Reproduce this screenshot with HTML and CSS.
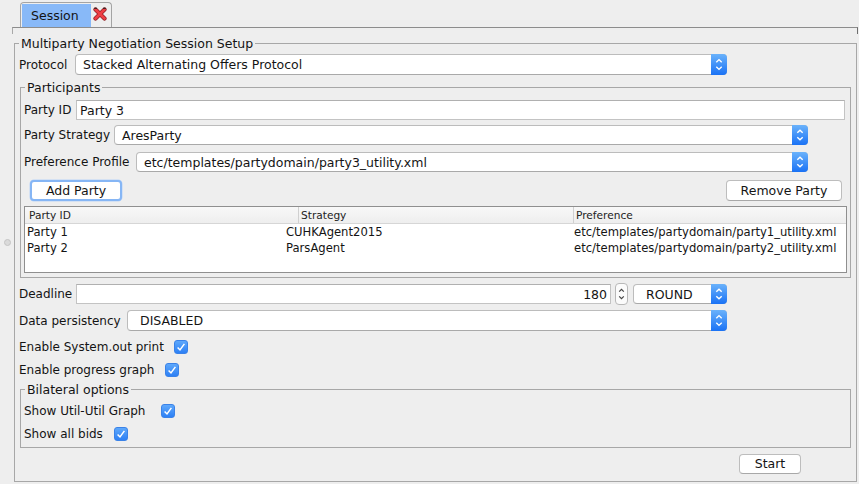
FILE: index.html
```html
<!DOCTYPE html>
<html>
<head>
<meta charset="utf-8">
<title>Session</title>
<link rel="stylesheet" href="styles.css">
</head>
<body>
<div class="tabstrip">
  <div class="tab">
    <span class="tab-label">Session</span>
    <svg class="tab-close" width="14" height="14" viewBox="0 0 14 14">
      <path d="M2.5 2.5 L11.5 11.5 M11.5 2.5 L2.5 11.5" stroke="#8e1a1f" stroke-width="4.2" stroke-linecap="round" fill="none"/>
      <path d="M2.5 2.5 L11.5 11.5 M11.5 2.5 L2.5 11.5" stroke="#ef3f45" stroke-width="2.8" stroke-linecap="round" fill="none"/>
      <path d="M1.2 1.3 L4 1.3 M10 1.3 L12.8 1.3" stroke="#222" stroke-width="1" fill="none"/>
    </svg>
  </div>
</div>
<div class="pane-edge"></div>
<span class="split-dot"></span>

<fieldset class="group setup">
  <legend>Multiparty Negotiation Session Setup</legend>

  <div class="row protocol-row">
    <span class="lbl">Protocol</span>
    <div class="combo">
      <span class="combo-text">Stacked Alternating Offers Protocol</span>
      <span class="combo-btn"><svg width="16" height="21" viewBox="0 0 16 21"><path d="M5.3 8.2 L8 5.6 L10.7 8.2 M5.3 12.8 L8 15.4 L10.7 12.8" stroke="#fff" stroke-width="1.4" fill="none"/></svg></span>
    </div>
  </div>

  <fieldset class="group participants">
    <legend>Participants</legend>
    <div class="row id-row">
      <span class="lbl">Party ID</span>
      <div class="field">Party 3</div>
    </div>
    <div class="row strat-row">
      <span class="lbl">Party Strategy</span>
      <div class="combo">
        <span class="combo-text">AresParty</span>
        <span class="combo-btn"><svg width="16" height="20" viewBox="0 0 16 20"><path d="M5.3 7.8 L8 5.2 L10.7 7.8 M5.3 12.2 L8 14.8 L10.7 12.2" stroke="#fff" stroke-width="1.4" fill="none"/></svg></span>
      </div>
    </div>
    <div class="row pref-row">
      <span class="lbl">Preference Profile</span>
      <div class="combo">
        <span class="combo-text">etc/templates/partydomain/party3_utility.xml</span>
        <span class="combo-btn"><svg width="16" height="20" viewBox="0 0 16 20"><path d="M5.3 7.8 L8 5.2 L10.7 7.8 M5.3 12.2 L8 14.8 L10.7 12.2" stroke="#fff" stroke-width="1.4" fill="none"/></svg></span>
      </div>
    </div>
    <div class="btn-row">
      <button class="btn btn-add">Add Party</button>
      <button class="btn btn-remove">Remove Party</button>
    </div>
    <div class="table">
      <div class="thead">
        <span>Party ID</span><span>Strategy</span><span>Preference</span>
      </div>
      <div class="trow">
        <span>Party 1</span><span>CUHKAgent2015</span><span>etc/templates/partydomain/party1_utility.xml</span>
      </div>
      <div class="trow">
        <span>Party 2</span><span>ParsAgent</span><span>etc/templates/partydomain/party2_utility.xml</span>
      </div>
    </div>
  </fieldset>

  <div class="row deadline-row">
    <span class="lbl">Deadline</span>
    <div class="field field-num">180</div>
    <span class="spinner"><svg width="11" height="20" viewBox="0 0 11 20"><path d="M3.2 7.6 L5.5 5.3 L7.8 7.6 M3.2 12.4 L5.5 14.7 L7.8 12.4" stroke="#444" stroke-width="1.2" fill="none"/></svg></span>
    <div class="combo combo-round">
      <span class="combo-text enum">ROUND</span>
      <span class="combo-btn"><svg width="16" height="20" viewBox="0 0 16 20"><path d="M5.3 7.8 L8 5.2 L10.7 7.8 M5.3 12.2 L8 14.8 L10.7 12.2" stroke="#fff" stroke-width="1.4" fill="none"/></svg></span>
    </div>
  </div>

  <div class="row persist-row">
    <span class="lbl">Data persistency</span>
    <div class="combo">
      <span class="combo-text enum">DISABLED</span>
      <span class="combo-btn"><svg width="16" height="21" viewBox="0 0 16 21"><path d="M5.3 8.2 L8 5.6 L10.7 8.2 M5.3 12.8 L8 15.4 L10.7 12.8" stroke="#fff" stroke-width="1.4" fill="none"/></svg></span>
    </div>
  </div>

  <div class="check-row check-sysout">
    <span class="lbl">Enable System.out print</span>
    <span class="cb"><svg width="14" height="14" viewBox="0 0 14 14"><path d="M3.6 7.4 L6 9.9 L10.4 3.9" stroke="#fff" stroke-width="1.5" fill="none"/></svg></span>
  </div>
  <div class="check-row check-progress">
    <span class="lbl">Enable progress graph</span>
    <span class="cb"><svg width="14" height="14" viewBox="0 0 14 14"><path d="M3.6 7.4 L6 9.9 L10.4 3.9" stroke="#fff" stroke-width="1.5" fill="none"/></svg></span>
  </div>

  <fieldset class="group bilateral">
    <legend>Bilateral options</legend>
    <div class="check-row check-util">
      <span class="lbl">Show Util-Util Graph</span>
      <span class="cb"><svg width="14" height="14" viewBox="0 0 14 14"><path d="M3.6 7.4 L6 9.9 L10.4 3.9" stroke="#fff" stroke-width="1.5" fill="none"/></svg></span>
    </div>
    <div class="check-row check-bids">
      <span class="lbl">Show all bids</span>
      <span class="cb"><svg width="14" height="14" viewBox="0 0 14 14"><path d="M3.6 7.4 L6 9.9 L10.4 3.9" stroke="#fff" stroke-width="1.5" fill="none"/></svg></span>
    </div>
  </fieldset>

  <div class="start-row">
    <button class="btn btn-start">Start</button>
  </div>
</fieldset>
</body>
</html>
```

FILE: styles.css
```css
* { box-sizing: border-box; }
html, body { margin: 0; padding: 0; }
body {
  background: #eeeeee;
  font-family: "DejaVu Sans", "Liberation Sans", sans-serif;
  font-size: 12.5px;
  color: #141414;
  width: 859px;
  height: 484px;
  overflow: hidden;
  position: relative;
}

/* tab strip */
.tabstrip {
  height: 27px;
  padding: 2px 0 0 20px;
  display: flex;
}
.tab {
  width: 92px;
  height: 25px;
  border: 1px solid #a4a4a4;
  border-bottom: none;
  border-radius: 4px 4px 0 0;
  padding: 1px 0 0 1px;
  display: flex;
  align-items: stretch;
}
.tab-label {
  width: 69px;
  background: #88b9f8;
  display: flex;
  align-items: center;
  padding-left: 9px;
  padding-bottom: 1px;
}
.tab-close {
  align-self: center;
  margin: -3px 0 0 2px;
}
.pane-edge {
  margin: 0 1px 0 12px;
  height: 7px;
  border-top: 1px solid #8c8c8c;
  border-left: 1px solid #a8a8a8;
  border-right: 1px solid #6e6e6e;
}
.split-dot {
  position: absolute;
  left: 4px;
  top: 239px;
  width: 7px;
  height: 7px;
  border-radius: 50%;
  background: #dadada;
  border: 1px solid #c4c4c4;
}

/* titled groups */
fieldset.group {
  border: 1px solid #a7a7a7;
  padding: 0;
  margin: 0;
  min-width: 0;
}
fieldset.group > legend {
  padding: 0 2px;
  margin-left: 4px;
  height: 15px;
  line-height: 15px;
  white-space: nowrap;
}
.setup {
  margin: 2px 2px 0 14px !important;
  padding: 0 0 6px 0 !important;
}
.participants {
  margin: 5px 5px 0 5px !important;
  padding: 0 0 4px 0 !important;
}
.bilateral {
  margin: 5px 5px 0 5px !important;
  padding: 0 0 6px 0 !important;
}

/* rows */
.row {
  display: flex;
  align-items: center;
  white-space: nowrap;
}
.lbl { white-space: nowrap; flex: none; font-size: 12px; }
.protocol-row { margin: 3px 129px 0 4px; height: 21px; }
.protocol-row .lbl { width: 56px; }
.id-row { margin: 5px 5px 0 3px; height: 20px; }
.id-row .lbl { width: 52px; }
.strat-row { margin: 5px 42px 0 3px; height: 20px; }
.strat-row .lbl { width: 90px; }
.pref-row { margin: 7px 42px 0 3px; height: 20px; }
.pref-row .lbl { width: 112px; }
.deadline-row { margin: 6px 129px 0 4px; height: 20px; }
.deadline-row .lbl { width: 57px; }
.persist-row { margin: 6px 129px 0 4px; height: 21px; }
.persist-row .lbl { width: 108px; }

/* combo box */
.combo {
  flex: 1;
  align-self: stretch;
  background: #fff;
  border: 1px solid #bcbcbc;
  border-bottom-color: #a9a9a9;
  border-radius: 4px;
  display: flex;
  align-items: center;
  min-width: 0;
}
.combo-text {
  flex: 1;
  padding-left: 7px;
  white-space: nowrap;
  overflow: hidden;
}
.combo-text.enum { padding-left: 12px; }
.combo-btn {
  width: 16px;
  align-self: stretch;
  margin: -1px -1px -1px 0;
  background: linear-gradient(#6ab2fb, #1a72f5);
  border-radius: 0 4px 4px 0;
  display: flex;
  align-items: center;
  justify-content: center;
}
.combo-btn svg { display: block; }
.combo-round {
  flex: 0 0 94px;
  margin-left: 5px;
}

/* text field */
.field {
  flex: 1;
  align-self: stretch;
  background: #fff;
  border: 1px solid #c3c3c3;
  border-top-color: #b0b0b0;
  padding-left: 3px;
  display: flex;
  align-items: center;
  white-space: nowrap;
}
.field-num {
  justify-content: flex-end;
  padding: 0 3px 0 0;
}
.spinner {
  flex: 0 0 13px;
  height: 22px;
  margin: -1px 0 -1px 4px;
  background: #fbfbfb;
  border: 1px solid #b8b8b8;
  border-radius: 4px;
  display: flex;
  align-items: center;
  justify-content: center;
}
.spinner svg { display: block; }

/* buttons */
.btn {
  font: inherit;
  color: #141414;
  background: #fff;
  border: 1px solid #bdbdbd;
  border-bottom-color: #a8a8a8;
  border-radius: 4px;
  padding: 0;
  height: 21px;
  line-height: 18px;
  text-align: center;
}
.btn-row {
  margin: 8px 8px 0 9px;
  height: 21px;
  display: flex;
  justify-content: space-between;
}
.btn-add {
  width: 92px;
  border: 2px solid #86b6f5;
  box-shadow: 0 0 0 0.5px #b9d4f8;
}
.btn-remove { width: 116px; }
.start-row {
  margin: 6px 55px 0 0;
  height: 21px;
  display: flex;
  justify-content: flex-end;
}
.btn-start { width: 62px; height: 20px; }

/* table */
.table {
  margin: 5px 3px 0 3px;
  height: 67px;
  border: 1px solid #8f8f8f;
  background: #fff;
  font-size: 11.6px;
}
.thead {
  height: 17px;
  display: grid;
  grid-template-columns: 273px 275px 1fr;
  background: linear-gradient(#f8f8f8, #eeeeee);
  border-bottom: 1px solid #d6d6d6;
  font-size: 10.6px;
  line-height: 16px;
  color: #222;
}
.thead span { padding-left: 4px; white-space: nowrap; }
.thead span + span { border-left: 1px solid #d0d0d0; padding-left: 2px; }
.trow {
  height: 16px;
  display: grid;
  grid-template-columns: 258px 288px 1fr;
  line-height: 16px;
  white-space: nowrap;
}
.trow span { padding-left: 3px; overflow: hidden; }
.trow span:first-child { padding-left: 2px; }

/* checkboxes */
.check-row {
  display: flex;
  align-items: center;
  height: 14px;
  white-space: nowrap;
}
.check-sysout { margin: 9px 0 0 4px; }
.check-sysout .lbl { width: 155px; }
.check-progress { margin: 9px 0 0 4px; }
.check-progress .lbl { width: 146px; }
.check-util { margin: 7px 0 0 3px; }
.check-util .lbl { width: 137px; }
.check-bids { margin: 9px 0 0 3px; }
.check-bids .lbl { width: 90px; }
.cb {
  flex: 0 0 14px;
  width: 14px;
  height: 14px;
  border-radius: 3px;
  background: linear-gradient(#5ea8fb, #2d80f5);
  border: 1px solid #3a82e8;
  display: flex;
  align-items: center;
  justify-content: center;
}
.cb svg { display: block; margin: -1px; }
```
